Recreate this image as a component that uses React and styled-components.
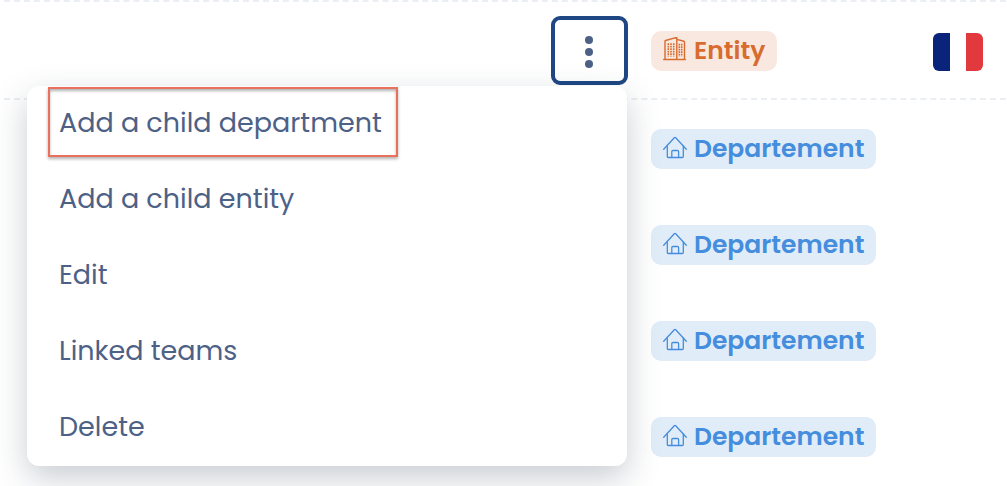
import React from "react";
import styled, { createGlobalStyle } from "styled-components";

const GlobalStyle = createGlobalStyle`
  *, *::before, *::after { box-sizing: border-box; }
  body {
    margin: 0;
    background: #fff;
    color: #4d6187;
    font-family: Poppins, Inter, "Liberation Sans", sans-serif;
  }
`;

const Page = styled.main`
  min-height: 100vh;
  padding: 0 1px 0 4px;
`;

const Table = styled.table`
  display: block;
  width: 100%;
`;

const Body = styled.tbody`
  display: block;
`;

const Row = styled.tr`
  display: grid;
  grid-template-columns: minmax(0, 1fr) 77px 23px 282px 50px;
  align-items: center;
  height: ${(p) => (p.$divided ? "100px" : "96px")};
  padding: 2px 23px 0 0;
  border: 0 dashed #ebeff3;
  border-width: ${(p) => (p.$divided ? "2px 0" : "0")};
`;

const ActionsCell = styled.td`
  grid-column: 2;
  align-self: start;
  position: relative;
  padding: 12px 0 1px;
`;

const TypeCell = styled.td`
  grid-column: 4;
  display: flex;
  padding: 0;
`;

const CountryCell = styled.td`
  grid-column: 5;
  display: flex;
  padding: 2px 0 0;
`;

const MoreButton = styled.button`
  display: flex;
  align-items: center;
  justify-content: center;
  width: 100%;
  height: 69px;
  padding: 3px 0 0;
  border: 4px solid #1f4783;
  border-radius: 9px;
  background: #fff;
  color: #4d6187;
  cursor: pointer;
`;

const Menu = styled.div`
  position: absolute;
  z-index: 1;
  top: 100%;
  right: 1px;
  width: 600px;
  border-radius: 12px;
  background: #fff;
  box-shadow: 0 12px 32px rgba(40, 60, 80, 0.25);
`;

const MenuItem = styled.button`
  display: block;
  position: relative;
  width: 100%;
  padding: 18px 32px 20px;
  border: 0;
  background: none;
  color: #4d6187;
  font: inherit;
  font-size: 27px;
  line-height: 38px;
  text-align: left;
  cursor: pointer;
`;

const Highlight = styled.span`
  position: absolute;
  top: 1px;
  left: 21px;
  width: 350px;
  height: 70px;
  border: 2px solid #e8705c;
  box-shadow: 0 2px 3px rgba(0, 0, 0, 0.3), inset 0 2px 3px rgba(0, 0, 0, 0.3);
`;

const tones = {
  entity: { color: "#d86c2e", background: "#f9e8df" },
  department: { color: "#458ddd", background: "#e1ecf9" },
};

const Badge = styled.span`
  display: inline-flex;
  align-items: center;
  gap: 7px;
  height: 40px;
  padding: 0 12px;
  border-radius: 10px;
  color: ${(p) => tones[p.$tone].color};
  background: ${(p) => tones[p.$tone].background};
  font-size: 25px;
  font-weight: 600;
  line-height: 40px;
`;

const Icon = styled.svg`
  display: block;
  flex: none;
  fill: none;
  stroke: currentColor;
  stroke-linecap: round;
  stroke-linejoin: round;
`;

const Flag = styled.svg`
  display: block;
  border-radius: 6px;
`;

function HomeIcon() {
  return (
    <Icon width="24" height="28" viewBox="0 0 24 28" strokeWidth="1.3" aria-hidden="true">
      <path d="M.7 14.2 11.3 2.7Q12 2 12.7 2.7L23.3 14.2" />
      <path d="M4.3 10.8V21.5Q4.3 22.5 5.3 22.5H19.3Q20.3 22.5 20.3 21.5V10.8" />
      <path d="M8.8 22.3V16.6Q8.8 15.5 9.9 15.5H14.5Q15.6 15.5 15.6 16.6V22.3" />
    </Icon>
  );
}

function BuildingIcon() {
  return (
    <Icon width="24" height="28" viewBox="0 0 24 28" strokeWidth="1.4" aria-hidden="true">
      <path d="M.7 22.5H22.3M2 22.5V4.3Q2 3.7 2.6 3.5L13.8.4V22.5M13.8 2.4 20.9 4.3Q21.5 4.5 21.5 5.2V22.5" />
      <path
        d="M5.3 6.2V19.6M8 6.2V19.6M10.7 6.2V19.6M16.3 6.8V19.6M18.7 6.8V19.6"
        strokeWidth="1.6"
        strokeDasharray="1.7 .8"
        strokeLinecap="butt"
      />
    </Icon>
  );
}

function DotsIcon() {
  return (
    <svg width="9" height="32" viewBox="0 0 9 32" fill="currentColor" aria-hidden="true">
      <circle cx="4" cy="4" r="4" />
      <circle cx="4" cy="16" r="4" />
      <circle cx="4" cy="28" r="4" />
    </svg>
  );
}

function FranceFlag() {
  return (
    <Flag width="50" height="38" viewBox="0 0 50 38" role="img" aria-label="France">
      <path fill="#0b247b" d="M0 0h17v38H0z" />
      <path fill="#fff" d="M17 0h16v38H17z" />
      <path fill="#e1393d" d="M33 0h17v38H33z" />
    </Flag>
  );
}

const menuItems = [
  { label: "Add a child department", highlighted: true },
  { label: "Add a child entity" },
  { label: "Edit" },
  { label: "Linked teams" },
  { label: "Delete" },
];

const departments = [1, 2, 3, 4];

export default function App() {
  return (
    <>
      <GlobalStyle />
      <Page>
        <Table>
          <Body>
            <Row $divided>
              <ActionsCell>
                <MoreButton type="button" aria-label="Actions" aria-haspopup="menu" aria-expanded="true">
                  <DotsIcon />
                </MoreButton>
                <Menu role="menu">
                  {menuItems.map((item) => (
                    <MenuItem key={item.label} type="button" role="menuitem">
                      {item.label}
                      {item.highlighted && <Highlight />}
                    </MenuItem>
                  ))}
                </Menu>
              </ActionsCell>
              <TypeCell>
                <Badge $tone="entity">
                  <BuildingIcon />
                  Entity
                </Badge>
              </TypeCell>
              <CountryCell>
                <FranceFlag />
              </CountryCell>
            </Row>
            {departments.map((id) => (
              <Row key={id}>
                <TypeCell>
                  <Badge $tone="department">
                    <HomeIcon />
                    Departement
                  </Badge>
                </TypeCell>
              </Row>
            ))}
          </Body>
        </Table>
      </Page>
    </>
  );
}
